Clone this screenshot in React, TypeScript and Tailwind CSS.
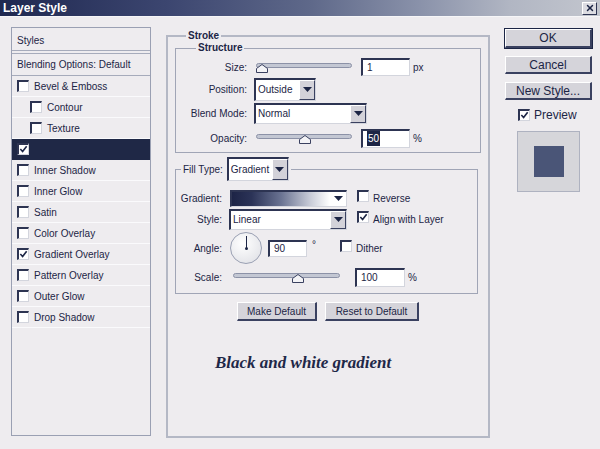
import React from 'react';
import { X } from 'lucide-react';

const sunken =
  'bg-white border-t-2 border-l-2 border-r border-b border-t-[#2d3452] border-l-[#2d3452] border-r-[#d3d5dd] border-b-[#d3d5dd]';

function Check({ checked = false }: { checked?: boolean }) {
  return (
    <span className={`relative inline-block w-[12px] h-[12px] shrink-0 ${sunken}`}>
      {checked && (
        <svg viewBox="0 0 10 10" className="absolute left-0 top-0 w-[9px] h-[9px]">
          <path d="M1.5 4.5 L4 7.2 L8.5 1.5" stroke="#1c2545" strokeWidth="1.8" fill="none" />
        </svg>
      )}
    </span>
  );
}

function Arrow() {
  return (
    <svg width="9" height="5" viewBox="0 0 9 5">
      <path d="M0 0 H9 L4.5 5 Z" fill="#1c2545" />
    </svg>
  );
}

function Select({ value, className }: { value: string; className: string }) {
  return (
    <div className={`flex items-stretch ${sunken} ${className}`}>
      <span className="flex-1 flex items-center pl-[2px]">{value}</span>
      <span className="w-[16px] bg-[#d3d2d9] border-l border-t border-l-white border-t-white border-r border-b border-r-[#3a4160] border-b-[#3a4160] flex items-center justify-center">
        <Arrow />
      </span>
    </div>
  );
}

function Field({ children, className }: { children: React.ReactNode; className: string }) {
  return <div className={`flex items-center pl-[4px] ${sunken} ${className}`}>{children}</div>;
}

function Slider({ className, thumb }: { className: string; thumb: string }) {
  return (
    <div className={`relative h-[12px] ${className}`}>
      <div className="absolute left-0 right-0 top-[2px] h-[5px] rounded-full bg-[#c3c7d3] border border-[#8c92a7]" />
      <svg className={`absolute top-[3px] ${thumb}`} width="12" height="9" viewBox="0 0 12 9">
        <path d="M0.5 8.5 V4.5 L6 0.5 L11.5 4.5 V8.5 Z" fill="#f3f3f6" stroke="#3a4160" />
      </svg>
    </div>
  );
}

function Btn({ children, className, def = false }: { children: React.ReactNode; className: string; def?: boolean }) {
  return (
    <div
      className={`flex items-center justify-center bg-[#d5d4da] border-t border-l border-t-white border-l-white border-r-2 border-b-2 border-r-[#3a4160] border-b-[#3a4160] ${
        def ? 'outline outline-1 outline-[#1c2545]' : ''
      } ${className}`}
    >
      {children}
    </div>
  );
}

const rows = [
  { label: 'Bevel & Emboss', indent: false, checked: false },
  { label: 'Contour', indent: true, checked: false },
  { label: 'Texture', indent: true, checked: false },
  { label: '', indent: false, checked: true, selected: true },
  { label: 'Inner Shadow', indent: false, checked: false },
  { label: 'Inner Glow', indent: false, checked: false },
  { label: 'Satin', indent: false, checked: false },
  { label: 'Color Overlay', indent: false, checked: false },
  { label: 'Gradient Overlay', indent: false, checked: true },
  { label: 'Pattern Overlay', indent: false, checked: false },
  { label: 'Outer Glow', indent: false, checked: false },
  { label: 'Drop Shadow', indent: false, checked: false },
];

export default function App() {
  return (
    <div className="w-[600px] h-[449px] overflow-hidden bg-[#eeecef] text-[#1c2545] text-[10px] font-['Liberation_Sans',Arial,sans-serif]">
      {/* title bar */}
      <div className="h-[17px] flex items-center justify-between pl-[3px] pr-[3px] bg-[linear-gradient(90deg,#1f2850_0%,#3c4670_28%,#5f698a_52%,#8a92aa_70%,#b1b6c3_85%,#c3c6ce_100%)] border-b border-[#f6f6f8]">
        <span className="text-white font-bold text-[12px] leading-none">Layer Style</span>
        <span className="w-[15px] h-[13px] flex items-center justify-center bg-[#dcdce2] border-t border-l border-t-white border-l-white border-r border-b border-r-[#2d3452] border-b-[#2d3452]">
          <X size={10} strokeWidth={3.5} color="#1c2545" />
        </span>
      </div>

      <div className="flex items-start pt-[10px]">
        {/* left list */}
        <div className="ml-[11px] w-[140px] h-[409px] border border-[#9aa0b3] flex flex-col">
          <div className="h-[23px] flex items-center pl-[5px] pt-[3px] border-b border-[#a6abbb]">Styles</div>
          <div className="h-[23px] mt-[2px] flex items-center pl-[5px] border-t border-b border-[#a6abbb]">
            Blending Options: Default
          </div>
          {rows.map((r, i) => (
            <div
              key={i}
              className={`h-[21px] flex items-center gap-[5px] border-b ${
                r.selected ? 'bg-[#1f2846] border-[#1f2846]' : 'border-[#fafafc]'
              } ${r.indent ? 'pl-[18px]' : 'pl-[5px]'}`}
            >
              <Check checked={r.checked} />
              <span>{r.label}</span>
            </div>
          ))}
        </div>

        {/* main panel */}
        <fieldset className="ml-[15px] mt-[3px] w-[324px] h-[408px] border-2 border-[#b4b8c5]">
          <legend className="ml-[18px] px-[2px] font-bold leading-[12px]">Stroke</legend>

          <fieldset className="mx-[7px] border border-[#a0a5b6]">
            <legend className="ml-[20px] px-[2px] font-bold leading-[12px]">Structure</legend>
            <div className="flex flex-col pt-[3px] pb-[1px]">
              <div className="h-[20px] flex items-center">
                <span className="w-[71px] text-right">Size:</span>
                <Slider className="ml-[9px] w-[96px]" thumb="left-[0px]" />
                <Field className="ml-[9px] w-[49px] h-[18px]">1</Field>
                <span className="ml-[3px]">px</span>
              </div>
              <div className="h-[24px] flex items-center">
                <span className="w-[71px] text-right">Position:</span>
                <Select value="Outside" className="ml-[7px] w-[62px] h-[23px]" />
              </div>
              <div className="h-[24px] flex items-center">
                <span className="w-[71px] text-right">Blend Mode:</span>
                <Select value="Normal" className="ml-[7px] w-[113px] h-[21px]" />
              </div>
              <div className="h-[26px] flex items-center">
                <span className="w-[71px] text-right">Opacity:</span>
                <Slider className="ml-[9px] w-[96px]" thumb="left-[43px]" />
                <Field className="ml-[9px] w-[49px] h-[19px]">
                  <span className="bg-[#1c2545] text-white px-[1px]">50</span>
                </Field>
                <span className="ml-[3px]">%</span>
              </div>
            </div>
          </fieldset>

          <fieldset className="ml-[7px] mr-[10px] mt-[4px] border border-[#a0a5b6]">
            <legend className="ml-[5px] px-[2px] flex items-center gap-[4px]">
              <span>Fill Type:</span>
              <Select value="Gradient" className="w-[62px] h-[24px]" />
            </legend>
            <div className="flex flex-col pt-[8px] pb-[4px]">
              <div className="h-[18px] flex items-center">
                <span className="w-[46px] text-right">Gradient:</span>
                <div className={`ml-[8px] w-[117px] h-[17px] flex items-stretch ${sunken}`}>
                  <span className="flex-1 bg-[linear-gradient(90deg,#1d2446_0%,#2b3357_20%,#6a7392_50%,#c9ccd8_80%,#ffffff_100%)]" />
                  <span className="w-[16px] bg-white flex items-center justify-center">
                    <Arrow />
                  </span>
                </div>
                <span className="ml-[10px]">
                  <Check />
                </span>
                <span className="ml-[4px]">Reverse</span>
              </div>
              <div className="h-[24px] flex items-center">
                <span className="w-[46px] text-right">Style:</span>
                <Select value="Linear" className="ml-[7px] w-[118px] h-[21px]" />
                <span className="ml-[10px]">
                  <Check checked />
                </span>
                <span className="ml-[4px]">Align with Layer</span>
              </div>
              <div className="h-[34px] flex items-center">
                <span className="w-[46px] text-right">Angle:</span>
                <div className="ml-[8px] relative w-[32px] h-[32px] rounded-full border border-[#9aa0b3] bg-[radial-gradient(circle_at_40%_35%,#ffffff,#dcdde3)]">
                  <span className="absolute left-[15px] top-[3px] w-[1px] h-[13px] bg-[#1c2545]" />
                  <span className="absolute left-[14px] top-[14px] w-[3px] h-[3px] rounded-full bg-[#1c2545]" />
                </div>
                <Field className="ml-[6px] w-[39px] h-[17px]">90</Field>
                <span className="ml-[5px] -mt-[8px]">°</span>
                <span className="ml-[24px]">
                  <Check />
                </span>
                <span className="ml-[4px]">Dither</span>
              </div>
              <div className="h-[24px] flex items-center">
                <span className="w-[46px] text-right">Scale:</span>
                <Slider className="ml-[11px] w-[107px]" thumb="left-[59px]" />
                <Field className="ml-[15px] w-[50px] h-[19px]">100</Field>
                <span className="ml-[3px]">%</span>
              </div>
            </div>
          </fieldset>

          <div className="mt-[8px] flex justify-center gap-[8px]">
            <Btn className="w-[80px] h-[19px]">Make Default</Btn>
            <Btn className="w-[94px] h-[19px]">Reset to Default</Btn>
          </div>

          <div className="mt-[31px] ml-[47px] font-['Liberation_Serif',serif] font-bold italic text-[17px] leading-[22px] text-[#1e2848]">
            Black and white gradient
          </div>
        </fieldset>

        {/* right column */}
        <div className="ml-[15px] mt-[2px] w-[87px] flex flex-col text-[12px]">
          <Btn def className="h-[19px]">OK</Btn>
          <Btn className="mt-[8px] h-[18px]">Cancel</Btn>
          <Btn className="mt-[8px] h-[18px]">New Style...</Btn>
          <div className="mt-[8px] h-[14px] flex items-center pl-[13px] gap-[4px]">
            <Check checked />
            <span>Preview</span>
          </div>
          <div className="mt-[9px] ml-[12px] w-[63px] h-[61px] bg-[#d6d6da] border border-[#aeb2c0] flex items-center justify-center">
            <div className="w-[30px] h-[31px] bg-[#4a5577]" />
          </div>
        </div>
      </div>
    </div>
  );
}
